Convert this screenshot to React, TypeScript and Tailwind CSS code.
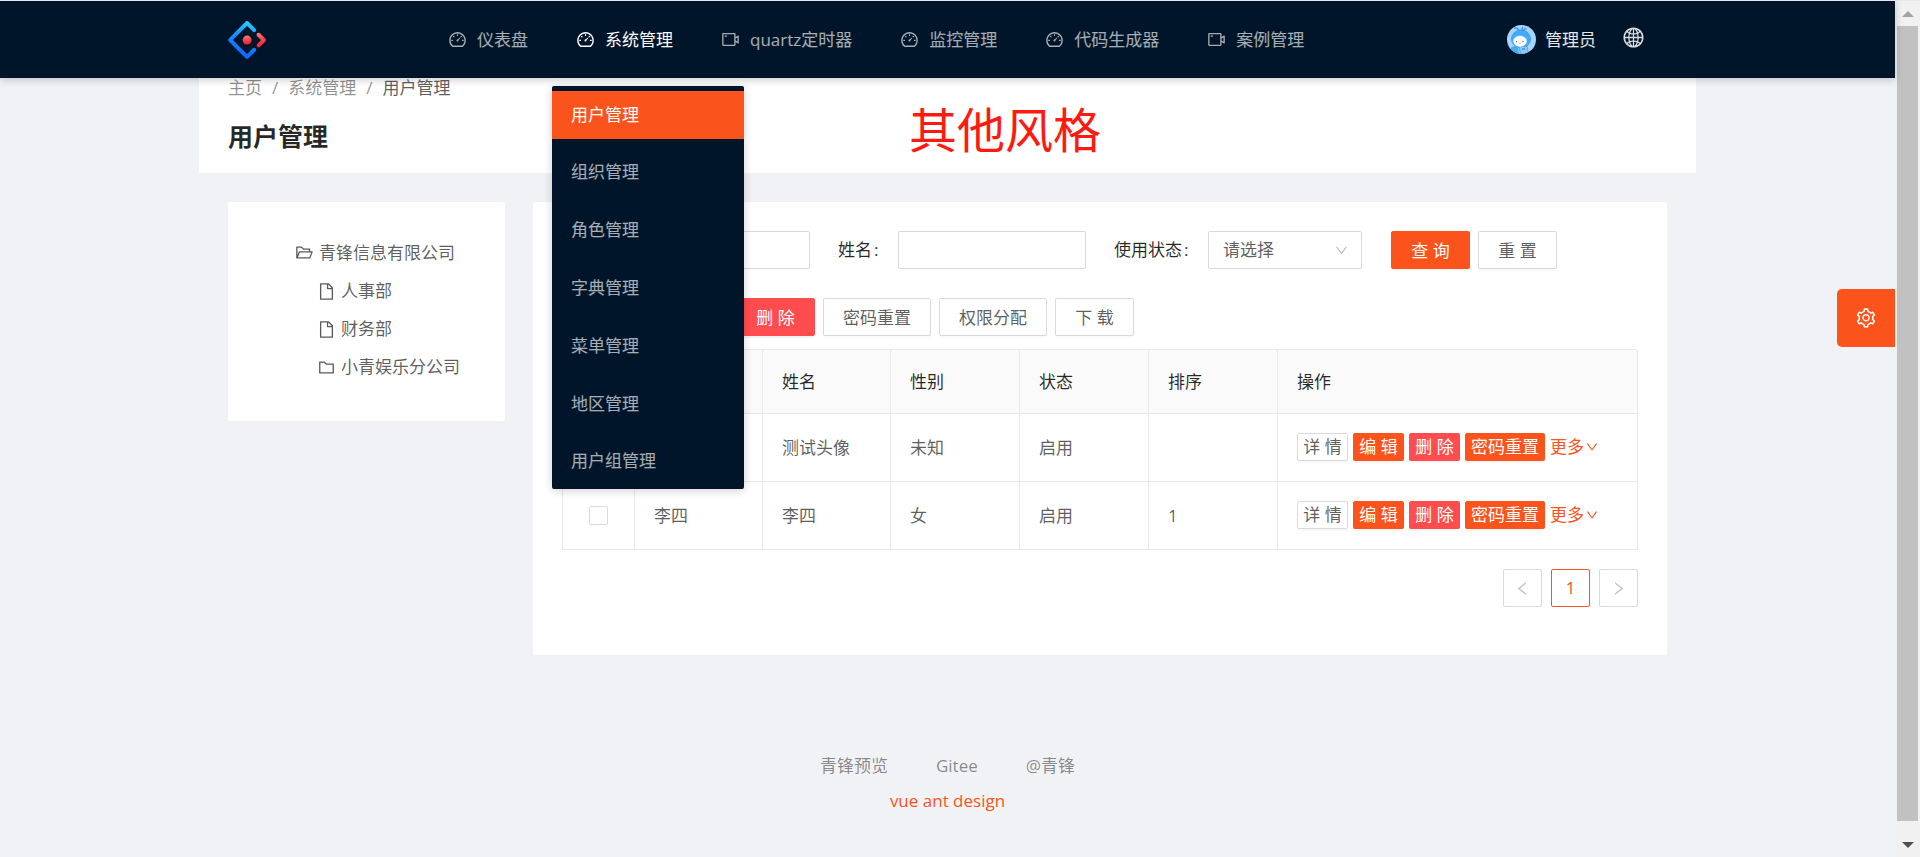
import React from 'react';
import type { IconType } from 'react-icons';
import {
  AiOutlineDashboard,
  AiOutlineDown,
  AiOutlineFile,
  AiOutlineFolder,
  AiOutlineFolderOpen,
  AiOutlineGlobal,
  AiOutlineLeft,
  AiOutlineRight,
  AiOutlineSetting,
  AiOutlineVideoCamera,
} from 'react-icons/ai';

const navItems: { label: string; icon: IconType; active?: boolean }[] = [
  { label: '仪表盘', icon: AiOutlineDashboard },
  { label: '系统管理', icon: AiOutlineDashboard, active: true },
  { label: 'quartz定时器', icon: AiOutlineVideoCamera },
  { label: '监控管理', icon: AiOutlineDashboard },
  { label: '代码生成器', icon: AiOutlineDashboard },
  { label: '案例管理', icon: AiOutlineVideoCamera },
];

const subMenu = ['用户管理', '组织管理', '角色管理', '字典管理', '菜单管理', '地区管理', '用户组管理'];

const rows = [
  { account: '测试', name: '测试头像', sex: '未知', status: '启用', sort: '' },
  { account: '李四', name: '李四', sex: '女', status: '启用', sort: '1' },
];

function Logo() {
  return (
    <svg viewBox="0 0 200 200" className="size-[38px]" aria-hidden="true">
      <defs>
        <linearGradient id="logo-blue" x1="0.6" y1="0" x2="0.4" y2="1">
          <stop offset="0" stopColor="#29cdff" />
          <stop offset="0.4" stopColor="#148eff" />
          <stop offset="1" stopColor="#0a60ff" />
        </linearGradient>
        <linearGradient id="logo-red" x1="0.4" y1="0" x2="0.5" y2="1">
          <stop offset="0" stopColor="#fa816e" />
          <stop offset="0.4" stopColor="#f74a5c" />
          <stop offset="1" stopColor="#f51d2c" />
        </linearGradient>
      </defs>
      <path
        fill="url(#logo-blue)"
        d="M91.59 4.18 4.18 91.51c-4.7 4.7-4.7 12.28 0 16.98l87.41 87.33c4.7 4.7 12.29 4.7 16.99 0l36.65-36.62c4.2-4.2 4.2-11.02 0-15.22-4.21-4.21-11.04-4.21-15.24 0l-27.79 27.76c-1.17 1.17-2.94 1.17-4.11 0l-69.8-69.75c-1.17-1.17-1.17-2.94 0-4.11l69.8-69.74c1.17-1.17 2.94-1.17 4.11 0l27.79 27.76c4.2 4.2 11.03 4.2 15.24 0 4.2-4.21 4.2-11.02 0-15.23L108.58 4.06c-4.72-4.6-12.31-4.56-16.99.12Z"
      />
      <path
        fill="url(#logo-red)"
        d="M153.69 135.85c4.2 4.21 11.03 4.21 15.24 0l27.03-27.01c4.7-4.7 4.7-12.28 0-16.97l-27.27-27.15c-4.22-4.2-11.04-4.2-15.25.01-4.21 4.21-4.21 11.02 0 15.23l18.41 18.4c1.17 1.17 1.17 2.94 0 4.11l-18.16 18.16c-4.21 4.2-4.21 11.02 0 15.22Z"
      />
      <circle cx="100.5" cy="100.4" r="23.6" fill="url(#logo-red)" />
    </svg>
  );
}

function Avatar() {
  return (
    <svg viewBox="0 0 58 58" className="size-[29px]" aria-hidden="true">
      <defs>
        <clipPath id="avatar-clip">
          <circle cx="29" cy="29" r="29" />
        </clipPath>
      </defs>
      <g clipPath="url(#avatar-clip)">
        <rect width="58" height="58" fill="#a3d7ff" />
        <path d="M14 6q7-1 11 6M29 12q1-6 3-8M31 12q4-5 8-5" fill="none" stroke="#3d8fe6" strokeWidth="2.5" />
        <ellipse cx="28" cy="28" rx="19" ry="18" fill="#3fadfa" stroke="#3a8ee6" strokeWidth="1.5" />
        <path d="M8 45q6-5 14-2l2 15H6Z" fill="#3fadfa" />
        <path d="M24 43h16l3 15H27Z" fill="#8cc8fb" stroke="#4b93e3" strokeWidth="1.5" />
        <path d="M30 46h6v4h-6Z" fill="#5b9fe8" />
        <ellipse cx="26" cy="32.500" rx="14" ry="11.500" fill="#fff" stroke="#5f9fe0" strokeWidth="1" />
        <circle cx="19" cy="33" r="1.500" fill="#5a6fc0" />
        <circle cx="32" cy="33" r="1.500" fill="#5a6fc0" />
        <path d="M24 36q2 2 4 0" fill="none" stroke="#e78aa5" strokeWidth="1.500" />
      </g>
    </svg>
  );
}

function Button({ children, tone = 'plain', size = 'normal' }: {
  children: React.ReactNode;
  tone?: 'plain' | 'primary' | 'danger';
  size?: 'normal' | 'small';
}) {
  const tones = {
    plain: 'border-[#d9d9d9] bg-white text-black/65 shadow-[0_2px_0_rgba(0,0,0,0.02)]',
    primary: 'border-[#fa541c] bg-[#fa541c] text-white shadow-[0_2px_0_rgba(0,0,0,0.045)]',
    danger: 'border-[#ff4d4f] bg-[#ff4d4f] text-white shadow-[0_2px_0_rgba(0,0,0,0.045)]',
  };
  const sizes = { normal: 'h-[38px] min-w-[79px] px-[19px]', small: 'h-7 min-w-[51px] px-[5px]' };
  return (
    <button
      type="button"
      className={`flex shrink-0 items-center justify-center whitespace-nowrap rounded-[2px] border leading-none ${tones[tone]} ${sizes[size]}`}
    >
      {children}
    </button>
  );
}

function FieldLabel({ htmlFor, children }: { htmlFor: string; children: string }) {
  return (
    <label htmlFor={htmlFor} className="flex shrink-0 whitespace-nowrap text-black/85">
      {children}
      <span className="w-[26px] pl-[2px]">:</span>
    </label>
  );
}

function Header() {
  return (
    <header className="relative z-20 border-t border-[#e4e8ea] bg-[#001529] shadow-[0_2px_8px_rgba(0,0,0,0.2)]">
      <div className="mx-auto flex h-[77px] max-w-[1497px] items-center px-[29px]">
        <a href="#home" aria-label="首页" className="mr-[158px] shrink-0">
          <Logo />
        </a>
        <nav className="flex flex-1 items-center">
          {navItems.map(({ label, icon: Icon, active }) => (
            <div key={label} className="relative px-6">
              <a
                href="#nav"
                className={`flex items-center gap-[10px] whitespace-nowrap ${active ? 'text-white' : 'text-white/65'}`}
              >
                <Icon className="size-[19px]" />
                {label}
              </a>
              {active && (
                <ul className="absolute top-[59px] left-0 flex h-[403px] w-48 flex-col justify-between rounded-[2px] bg-[#001529] pt-[5px] pb-[3px] shadow-[0_2px_10px_rgba(0,0,0,0.18)]">
                  {subMenu.map((item, i) => (
                    <li key={item}>
                      <a
                        href="#menu"
                        className={`flex h-12 items-center px-[19px] ${i === 0 ? 'bg-[#fa541c] text-white' : 'text-white/65'}`}
                      >
                        {item}
                      </a>
                    </li>
                  ))}
                </ul>
              )}
            </div>
          ))}
        </nav>
        <div className="flex items-center gap-[26px] pr-[22px] text-white/85">
          <a href="#account" className="flex items-center gap-[9px] whitespace-nowrap text-white/90">
            <Avatar />
            管理员
          </a>
          <button type="button" aria-label="语言" className="pb-1">
            <AiOutlineGlobal className="size-[23px]" />
          </button>
        </div>
      </div>
    </header>
  );
}

function OrgTree() {
  const children = [
    { label: '人事部', icon: AiOutlineFile },
    { label: '财务部', icon: AiOutlineFile },
    { label: '小青娱乐分公司', icon: AiOutlineFolder },
  ];
  return (
    <aside className="w-[277px] shrink-0 rounded-[2px] bg-white pt-[31px] pb-[35px] pl-[67px]">
      <div className="flex h-[39px] items-center gap-[5px]">
        <AiOutlineFolderOpen className="size-[19px]" />
        青锋信息有限公司
      </div>
      <ul className="pl-[22px]">
        {children.map(({ label, icon: Icon }) => (
          <li key={label} className="flex h-[38px] items-center gap-[5px]">
            <Icon className="size-[19px]" />
            {label}
          </li>
        ))}
      </ul>
    </aside>
  );
}

function SearchForm() {
  const box = 'h-[38px] rounded-[2px] border border-[#d9d9d9] bg-white';
  return (
    <form className="flex items-center">
      <FieldLabel htmlFor="account">账号</FieldLabel>
      <input id="account" className={`${box} mr-7 w-[188px] px-3`} />
      <FieldLabel htmlFor="name">姓名</FieldLabel>
      <input id="name" className={`${box} mr-7 w-[188px] px-3`} />
      <FieldLabel htmlFor="status">使用状态</FieldLabel>
      <div className="relative mr-[29px]">
        <select id="status" className={`${box} block w-[154px] appearance-none px-[14px] text-black/65`}>
          <option>请选择</option>
        </select>
        <AiOutlineDown className="pointer-events-none absolute top-3 right-[13px] size-[15px] text-black/25" />
      </div>
      <div className="flex gap-2">
        <Button tone="primary">查 询</Button>
        <Button>重 置</Button>
      </div>
    </form>
  );
}

function UserTable() {
  const cell = 'border-r border-b border-[#e8e8e8] px-[19px] text-left font-normal';
  const box = 'mx-auto block size-[19px] appearance-none rounded-[2px] border border-[#d9d9d9] bg-white';
  return (
    <table className="w-full table-fixed border-separate border-spacing-0 rounded-t-[4px] border-t border-l border-[#e8e8e8]">
      <colgroup>
        <col className="w-[72px]" />
        <col className="w-32" />
        <col className="w-32" />
        <col className="w-[129px]" />
        <col className="w-[129px]" />
        <col className="w-[129px]" />
        <col />
      </colgroup>
      <thead>
        <tr className="h-16 bg-[#fafafa] text-black/85">
          <th className={cell}>
            <input type="checkbox" aria-label="全选" className={box} />
          </th>
          {['账号', '姓名', '性别', '状态', '排序', '操作'].map((h) => (
            <th key={h} className={cell}>{h}</th>
          ))}
        </tr>
      </thead>
      <tbody>
        {rows.map((r) => (
          <tr key={r.name} className="h-[68px]">
            <td className={cell}>
              <input type="checkbox" aria-label={r.name} className={box} />
            </td>
            <td className={cell}>{r.account}</td>
            <td className={cell}>{r.name}</td>
            <td className={cell}>{r.sex}</td>
            <td className={cell}>{r.status}</td>
            <td className={cell}>{r.sort}</td>
            <td className={cell}>
              <div className="flex items-center gap-[5px] pb-[2px]">
                <Button size="small">详 情</Button>
                <Button size="small" tone="primary">编 辑</Button>
                <Button size="small" tone="danger">删 除</Button>
                <Button size="small" tone="primary">密码重置</Button>
                <a href="#more" className="flex items-center gap-px whitespace-nowrap text-[#fa541c]">
                  更多
                  <AiOutlineDown className="size-[14px]" />
                </a>
              </div>
            </td>
          </tr>
        ))}
      </tbody>
    </table>
  );
}

function Pagination() {
  const item = 'flex h-[38px] w-[39px] items-center justify-center rounded-[2px] border bg-white';
  return (
    <nav aria-label="分页" className="mt-[19px] flex justify-end gap-[9px]">
      <button type="button" aria-label="上一页" className={`${item} border-[#d9d9d9] text-black/25`}>
        <AiOutlineLeft className="size-[17px]" />
      </button>
      <button type="button" className={`${item} border-[#fa541c] text-[#fa541c]`}>1</button>
      <button type="button" aria-label="下一页" className={`${item} border-[#d9d9d9] text-black/25`}>
        <AiOutlineRight className="size-[17px]" />
      </button>
    </nav>
  );
}

function ScrollRail() {
  return (
    <div aria-hidden="true" className="flex w-[25px] shrink-0 flex-col border-t border-[#e4e8ea] bg-[#f1f1f1]">
      <div className="flex h-[25px] items-center justify-center">
        <svg viewBox="0 0 12 6" className="h-[6px] w-3"><path d="M6 0 12 6H0Z" fill="#a3a3a3" /></svg>
      </div>
      <div className="mr-[2px] ml-[2px] flex-1 bg-[#c1c1c1]" />
      <div className="flex h-9 items-center justify-center pt-3">
        <svg viewBox="0 0 12 6" className="h-[6px] w-3"><path d="M0 0H12L6 6Z" fill="#505050" /></svg>
      </div>
    </div>
  );
}

export default function App() {
  return (
    <div className="flex min-h-screen bg-[#f0f2f5] font-['Open_Sans','Noto_Sans_CJK_SC',sans-serif] text-[17px] leading-[26px] text-black/65">
      <div className="relative min-w-0 flex-1">
        <Header />
        <main className="mx-auto max-w-[1497px]">
          <section className="relative bg-white px-[29px] pb-5">
            <nav aria-label="面包屑" className="flex h-5 items-center gap-[10px] text-black/45">
              <a href="#home">主页</a>
              <span>/</span>
              <a href="#system">系统管理</a>
              <span>/</span>
              <span className="text-black/65">用户管理</span>
            </nav>
            <h1 className="mt-[21px] text-[25px] leading-[34px] font-semibold text-black/85">用户管理</h1>
            <p className="absolute top-6 left-[710px] text-[48px] leading-[56px] text-[#ff1a10]">其他风格</p>
          </section>
          <div className="flex items-start gap-7 px-[29px] pt-[29px]">
            <OrgTree />
            <section className="min-w-0 flex-1 rounded-[2px] bg-white px-[29px] pt-[29px] pb-12">
              <SearchForm />
              <div className="mt-[29px] mb-[13px] flex gap-2">
                <Button tone="primary">新 增</Button>
                <Button tone="primary">修 改</Button>
                <Button tone="danger">删 除</Button>
                <Button>密码重置</Button>
                <Button>权限分配</Button>
                <Button>下 载</Button>
              </div>
              <UserTable />
              <Pagination />
            </section>
          </div>
        </main>
        <footer className="pt-[98px] text-center text-black/45">
          <div className="flex justify-center gap-12">
            <a href="#preview">青锋预览</a>
            <a href="#gitee">Gitee</a>
            <a href="#author">@青锋</a>
          </div>
          <a href="#vue" className="mt-[9px] inline-block text-[#fa541c]">vue ant design</a>
        </footer>
        <button
          type="button"
          aria-label="设置"
          className="absolute top-[289px] right-0 flex size-[58px] items-center justify-center rounded-l-[5px] bg-[#fa541c] text-white"
        >
          <AiOutlineSetting className="size-[22px]" />
        </button>
      </div>
      <ScrollRail />
    </div>
  );
}
